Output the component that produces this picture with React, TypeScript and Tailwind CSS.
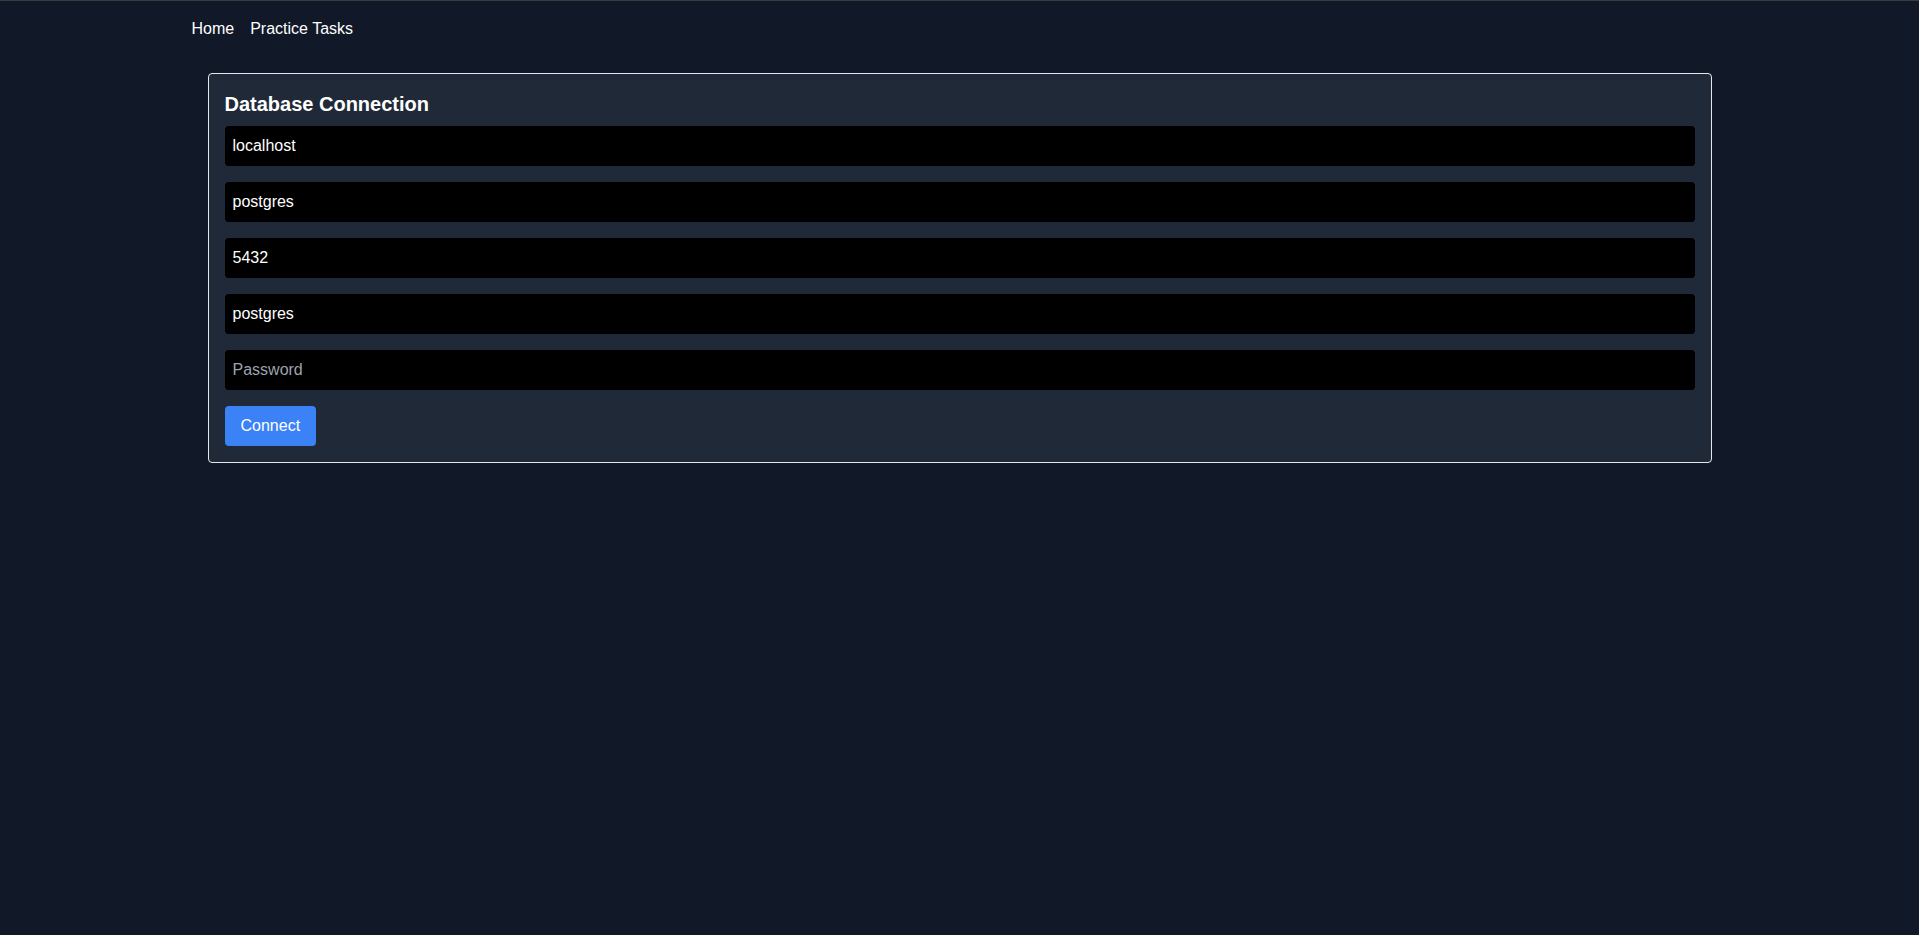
export default function App() {
  return (
    <div
      className="min-h-screen border-t border-[#3b3a3d] bg-[#111827] text-white"
      style={{ fontFamily: '"Liberation Sans", Arial, sans-serif' }}
    >
      <div className="mx-auto max-w-screen-2xl">
        <nav className="flex gap-4 py-4 text-base">
          <a href="#" className="text-white">
            Home
          </a>
          <a href="#" className="text-white">
            Practice Tasks
          </a>
        </nav>

        <div className="p-4">
          <div className="rounded border border-[#e5e7eb] bg-[#1f2937] p-4">
            <h2 className="mb-2 text-xl font-bold">Database Connection</h2>
            <input
              className="mb-4 block w-full rounded bg-black p-2 text-base text-white outline-none placeholder:text-[#9ca3af]"
              defaultValue="localhost"
            />
            <input
              className="mb-4 block w-full rounded bg-black p-2 text-base text-white outline-none placeholder:text-[#9ca3af]"
              defaultValue="postgres"
            />
            <input
              className="mb-4 block w-full rounded bg-black p-2 text-base text-white outline-none placeholder:text-[#9ca3af]"
              defaultValue="5432"
            />
            <input
              className="mb-4 block w-full rounded bg-black p-2 text-base text-white outline-none placeholder:text-[#9ca3af]"
              defaultValue="postgres"
            />
            <input
              type="password"
              placeholder="Password"
              className="mb-4 block w-full rounded bg-black p-2 text-base text-white outline-none placeholder:text-[#9ca3af]"
            />
            <button className="rounded bg-[#3b82f6] px-4 py-2 text-base text-white">Connect</button>
          </div>
        </div>
      </div>
    </div>
  );
}
